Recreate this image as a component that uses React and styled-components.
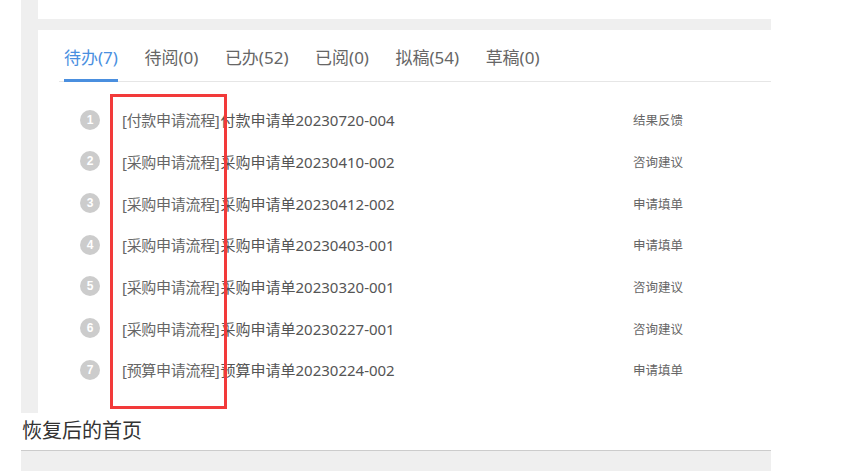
import styled, {createGlobalStyle} from "styled-components";

const GlobalStyle = createGlobalStyle`
    html, body {
        margin: 0;
        padding: 0;
        background: #fff;
        font-family: "Noto Sans", "Noto Sans CJK SC", sans-serif;
    }
`;

const Frame = styled.div`
    margin-left: 21px;
    width: 750px;
    background: #efefef;
    padding-left: 17px;
    box-sizing: border-box;
    display: flex;
    flex-direction: column;
    gap: 11px;
`;

const PrevCard = styled.div`
    height: 19px;
    background: #fff;
`;

const Panel = styled.div`
    position: relative;
    height: 383px;
    background: #fff;
`;

const TabBar = styled.div`
    margin-left: 21px;
    padding-left: 5px;
    display: flex;
    gap: 26.5px;
    border-bottom: 1px solid #e6e6e6;
`;

const Tab = styled.div`
    padding: 16px 0 9px;
    line-height: 24px;
    font-size: 17px;
    color: ${(props) => (props.$active ? "#4a8fdf" : "#666")};
    border-bottom: 3px solid ${(props) => (props.$active ? "#4a8fdf" : "transparent")};
    margin-bottom: -1px;
`;

const List = styled.div`
    padding: 17px 0 0 42px;
`;

const Row = styled.div`
    height: 41.67px;
    display: grid;
    grid-template-columns: 20px 511px auto;
    column-gap: 22px;
    align-items: center;
`;

const Num = styled.span`
    width: 20px;
    height: 20px;
    border-radius: 50%;
    background: #cccccc;
    color: #fff;
    font-size: 12px;
    font-weight: bold;
    line-height: 20px;
    text-align: center;
    font-family: "Liberation Sans", sans-serif;
`;

const Title = styled.span`
    font-size: 15px;
    color: #555;
    white-space: nowrap;
`;

const Tag = styled.span`
    color: #666;
    letter-spacing: -0.3px;
    margin-right: 1px;
`;

const Label = styled.span`
    margin-left: -22px;
    font-size: 12.5px;
    color: #666;
`;

const Highlight = styled.div`
    position: absolute;
    left: 72px;
    top: 64px;
    width: 117px;
    height: 315px;
    box-sizing: border-box;
    border: 3px solid #f23a3a;
    pointer-events: none;
`;

const Caption = styled.div`
    margin-left: 22px;
    height: 37px;
    line-height: 36px;
    font-size: 20px;
    color: #333;
`;

const Footer = styled.div`
    margin-left: 21px;
    width: 750px;
    height: 20px;
    border-top: 1px solid #cccccc;
    background: #efefef;
`;

const tabs = [
    {name: "待办(7)", active: true},
    {name: "待阅(0)"},
    {name: "已办(52)"},
    {name: "已阅(0)"},
    {name: "拟稿(54)"},
    {name: "草稿(0)"},
];

const rows = [
    {tag: "付款申请流程", title: "付款申请单20230720-004", label: "结果反馈"},
    {tag: "采购申请流程", title: "采购申请单20230410-002", label: "咨询建议"},
    {tag: "采购申请流程", title: "采购申请单20230412-002", label: "申请填单"},
    {tag: "采购申请流程", title: "采购申请单20230403-001", label: "申请填单"},
    {tag: "采购申请流程", title: "采购申请单20230320-001", label: "咨询建议"},
    {tag: "采购申请流程", title: "采购申请单20230227-001", label: "咨询建议"},
    {tag: "预算申请流程", title: "预算申请单20230224-002", label: "申请填单"},
];

export default function App() {
    return (
        <>
            <GlobalStyle/>
            <Frame>
                <PrevCard/>
                <Panel>
                    <TabBar>
                        {tabs.map((t) => (
                            <Tab key={t.name} $active={t.active}>{t.name}</Tab>
                        ))}
                    </TabBar>
                    <List>
                        {rows.map((r, i) => (
                            <Row key={i}>
                                <Num>{i + 1}</Num>
                                <Title><Tag>[{r.tag}]</Tag>{r.title}</Title>
                                <Label>{r.label}</Label>
                            </Row>
                        ))}
                    </List>
                    <Highlight/>
                </Panel>
            </Frame>
            <Caption>恢复后的首页</Caption>
            <Footer/>
        </>
    );
}
